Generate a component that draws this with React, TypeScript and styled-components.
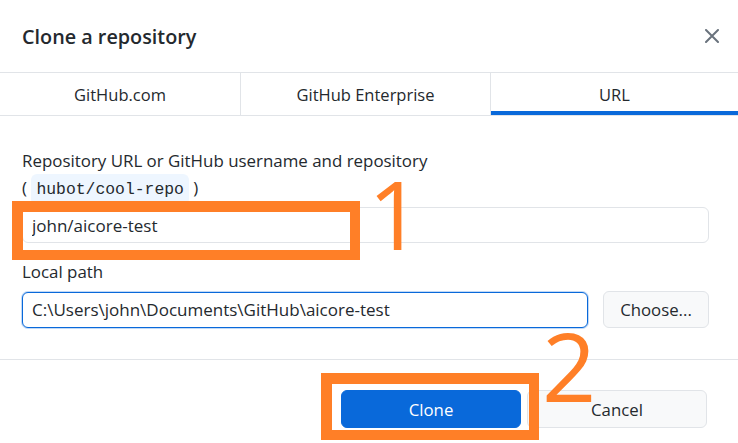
import React from "react";
import styled, { createGlobalStyle } from "styled-components";

const GlobalStyle = createGlobalStyle`
  html, body { margin: 0; padding: 0; background: #ffffff; }
  body { font-family: "Open Sans", "Noto Sans", sans-serif; color: #24292e; }
  * { box-sizing: border-box; }
`;

const Dialog = styled.div`
  position: relative;
  width: 738px;
  height: 443px;
  overflow: hidden;
  background: #ffffff;
  display: flex;
  flex-direction: column;
`;

const Header = styled.div`
  height: 72px;
  flex: none;
  padding: 0 19px 0 22px;
  display: flex;
  align-items: center;
  justify-content: space-between;
`;

const Title = styled.h1`
  margin: 0;
  font-size: 19.8px;
  font-weight: 600;
  color: #24292e;
`;

const CloseButton = styled.button`
  width: 14px;
  height: 14px;
  padding: 0;
  border: 0;
  background: transparent;
  display: flex;
  color: #6a737d;
`;

const TabBar = styled.div`
  height: 44px;
  flex: none;
  display: grid;
  grid-template-columns: 240px 250px 1fr;
  border-top: 1px solid #e1e4e8;
  border-bottom: 1px solid #e1e4e8;
`;

const Tab = styled.div<{ $active?: boolean }>`
  display: flex;
  align-items: center;
  justify-content: center;
  font-size: 16.5px;
  color: #24292e;
  & + & { border-left: 1px solid #e1e4e8; }
  box-shadow: ${(p) => (p.$active ? "inset 0 -4px 0 #0969da" : "none")};
`;

const Body = styled.div`
  flex: none;
  padding: 31px 29px 31px 22px;
  display: flex;
  flex-direction: column;
  gap: 15px;
  border-bottom: 1px solid #e1e4e8;
`;

const Field = styled.div`
  display: flex;
  flex-direction: column;
  gap: 6px;
`;

const Label = styled.div`
  font-size: 16.9px;
  line-height: 27px;
  color: #24292e;
`;

const Code = styled.code`
  font-family: "Liberation Mono", "DejaVu Sans Mono", monospace;
  font-size: 16.4px;
  line-height: 1;
  background: #eef6ff;
  border-radius: 6px;
  padding: 6px 5px;
  color: #24292e;
`;

const TextInput = styled.input<{ $focused?: boolean }>`
  flex: 1 1 auto;
  min-width: 0;
  height: 36px;
  padding: 0 9px;
  font-family: inherit;
  font-size: 17px;
  color: #24292e;
  background: #ffffff;
  border-radius: 6px;
  outline: none;
  border: 1px solid ${(p) => (p.$focused ? "#0969da" : "#e1e4e8")};
  box-shadow: ${(p) => (p.$focused ? "0 0 0 1px rgba(9,105,218,0.25)" : "none")};
`;

const PathRow = styled.div`
  display: flex;
  align-items: center;
  gap: 15px;
`;

const Button = styled.button<{ $primary?: boolean; $width: number; $height: number }>`
  flex: none;
  width: ${(p) => p.$width}px;
  height: ${(p) => p.$height}px;
  border-radius: 6px;
  font-family: inherit;
  font-size: 16.8px;
  padding: 0;
  color: ${(p) => (p.$primary ? "#ffffff" : "#24292e")};
  background: ${(p) => (p.$primary ? "#0969da" : "#f8f9fa")};
  border: 1px solid ${(p) => (p.$primary ? "#0969da" : "#e1e4e8")};
`;

const Footer = styled.div`
  flex: 1;
  padding: 30px 31px 0 0;
  display: flex;
  justify-content: flex-end;
  align-items: flex-start;
  gap: 6px;
`;

const Highlight = styled.div<{ $left: number; $top: number; $w: number; $h: number }>`
  position: absolute;
  left: ${(p) => p.$left}px;
  top: ${(p) => p.$top}px;
  width: ${(p) => p.$w}px;
  height: ${(p) => p.$h}px;
  border: 10px solid #ff7f27;
  border-left-width: 11px;
  border-top-width: 11px;
  pointer-events: none;
`;

const StepNumber = styled.div<{ $left: number; $top: number }>`
  position: absolute;
  left: ${(p) => p.$left}px;
  top: ${(p) => p.$top}px;
  font-family: "Open Sans", sans-serif;
  font-size: 95px;
  line-height: 70px;
  font-weight: 400;
  color: #ff7f27;
  pointer-events: none;
`;

export default function App() {
  return (
    <>
      <GlobalStyle />
      <Dialog>
        <Header>
          <Title>Clone a repository</Title>
          <CloseButton aria-label="Close">
            <svg width="14" height="14" viewBox="0 0 14 14">
              <path d="M1 1L13 13M13 1L1 13" stroke="currentColor" strokeWidth="2" strokeLinecap="round" />
            </svg>
          </CloseButton>
        </Header>
        <TabBar>
          <Tab>GitHub.com</Tab>
          <Tab>GitHub Enterprise</Tab>
          <Tab $active>URL</Tab>
        </TabBar>
        <Body>
          <Field>
            <Label>
              Repository URL or GitHub username and repository
              <br />( <Code>hubot/cool-repo</Code> )
            </Label>
            <TextInput readOnly value="john/aicore-test" />
          </Field>
          <Field>
            <Label>Local path</Label>
            <PathRow>
              <TextInput $focused readOnly value="C:\Users\john\Documents\GitHub\aicore-test" />
              <Button $width={106} $height={37}>Choose...</Button>
            </PathRow>
          </Field>
        </Body>
        <Footer>
          <Button $primary $width={180} $height={38}>Clone</Button>
          <Button $width={180} $height={38}>Cancel</Button>
        </Footer>
        <Highlight $left={12} $top={201} $w={348} $h={59} />
        <StepNumber $left={368} $top={178}>1</StepNumber>
        <Highlight $left={321} $top={373} $w={218} $h={67} />
        <StepNumber $left={542} $top={330}>2</StepNumber>
      </Dialog>
    </>
  );
}
